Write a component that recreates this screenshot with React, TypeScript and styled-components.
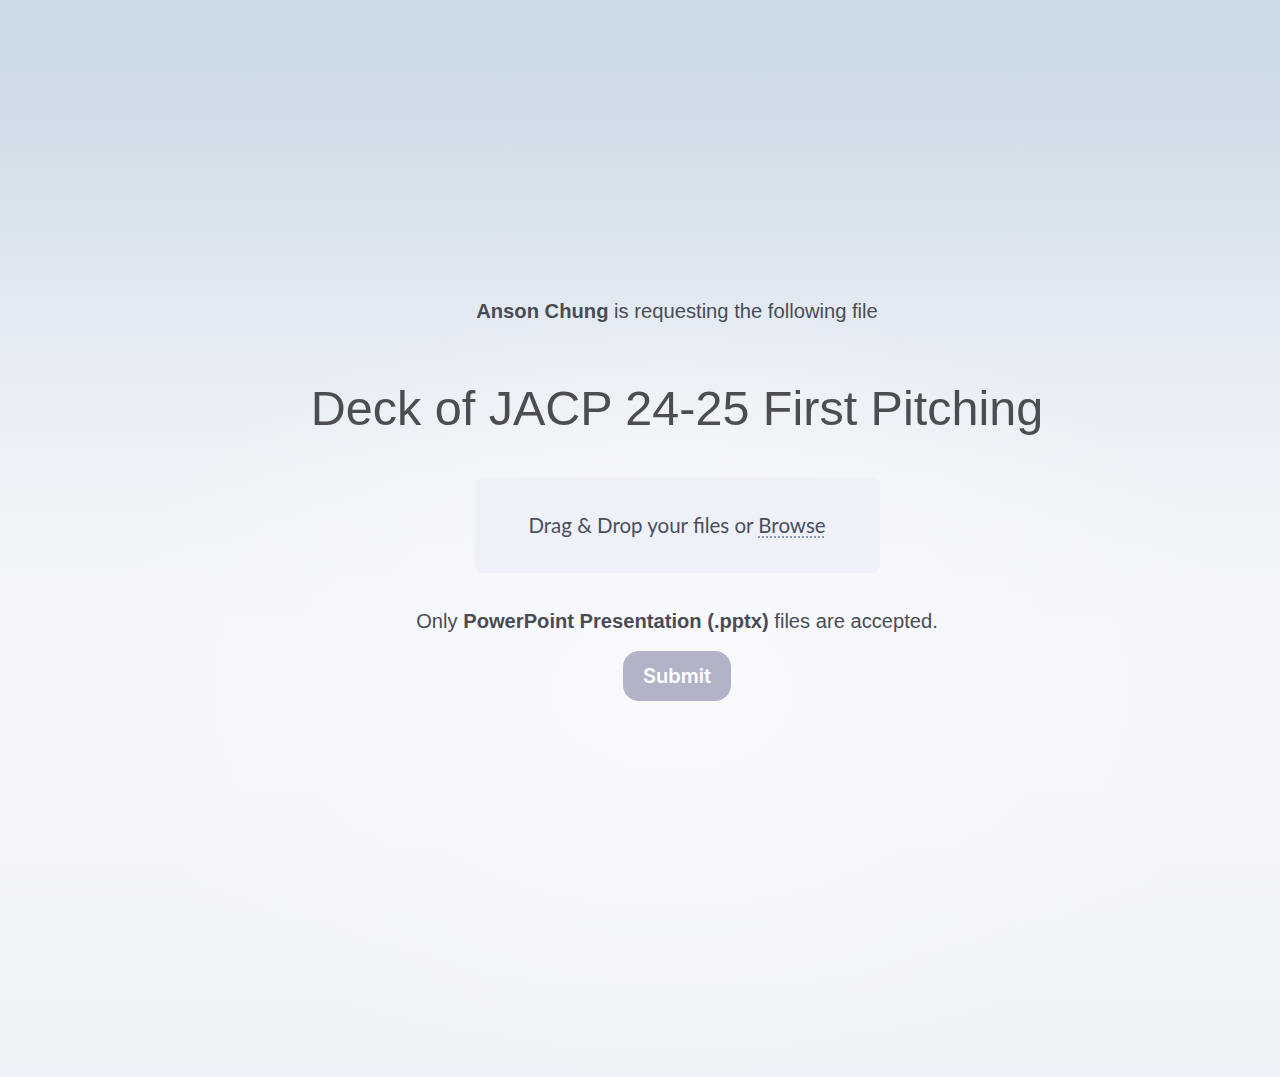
import React from "react";
import styled, { createGlobalStyle } from "styled-components";

const Global = createGlobalStyle`
  html, body { margin: 0; padding: 0; }
  body {
    min-height: 1077px;
    font-family: "Liberation Sans", Arial, sans-serif;
    color: #4a4c55;
  }
`;

const Page = styled.main`
  box-sizing: border-box;
  min-height: 1077px;
  padding: 299px 0 0 74px;
  display: flex;
  flex-direction: column;
  align-items: center;
  background:
    radial-gradient(ellipse 46% 36% at 52.5% 64%, rgba(249, 250, 253, 1) 0%, rgba(246, 248, 252, 0.85) 45%, rgba(244, 246, 251, 0) 100%),
    linear-gradient(180deg, #ccdae5 0%, #cfdce7 10%, #dce5ee 22%, #e6ecf4 32%, #eef2f8 45%, #f4f6fa 58%, #f4f6fa 72%, #f0f3f8 88%, #eef1f7 100%);
`;

const Requester = styled.p`
  margin: 0;
  font-size: 20.2px;
  line-height: 24px;
  color: #4a4c55;
  strong { font-weight: 700; }
`;

const Title = styled.h1`
  margin: 57px 0 0;
  font-size: 48.5px;
  line-height: 56px;
  font-weight: 400;
  color: #4b4d53;
`;

const DropZone = styled.div`
  margin-top: 41px;
  width: 405px;
  height: 96px;
  border-radius: 8px;
  background: #eef1f8;
  display: flex;
  align-items: center;
  justify-content: center;
  font-family: "Lato", "Noto Sans", sans-serif;
  font-size: 20.5px;
  color: #4a4e5e;
`;

const Browse = styled.span`
  text-decoration: underline dotted #8e97b4;
  text-underline-offset: 3px;
  cursor: pointer;
`;

const Note = styled.p`
  margin: 36px 0 0;
  font-size: 20.15px;
  line-height: 24px;
  color: #4a4c55;
  strong { font-weight: 700; }
`;

const Submit = styled.button`
  margin-top: 18px;
  width: 108px;
  height: 50px;
  border: none;
  border-radius: 16px;
  background: #b2b3c7;
  color: #ffffff;
  font-family: "Inter", sans-serif;
  font-size: 20px;
  font-weight: 600;
  cursor: not-allowed;
`;

export default function App() {
  return (
    <>
      <Global />
      <Page>
        <Requester>
          <strong>Anson Chung</strong> is requesting the following file
        </Requester>
        <Title>Deck of JACP 24-25 First Pitching</Title>
        <DropZone>
          <span>
            Drag &amp; Drop your files or <Browse>Browse</Browse>
          </span>
        </DropZone>
        <Note>
          Only <strong>PowerPoint Presentation (.pptx)</strong> files are accepted.
        </Note>
        <Submit disabled>Submit</Submit>
      </Page>
    </>
  );
}
